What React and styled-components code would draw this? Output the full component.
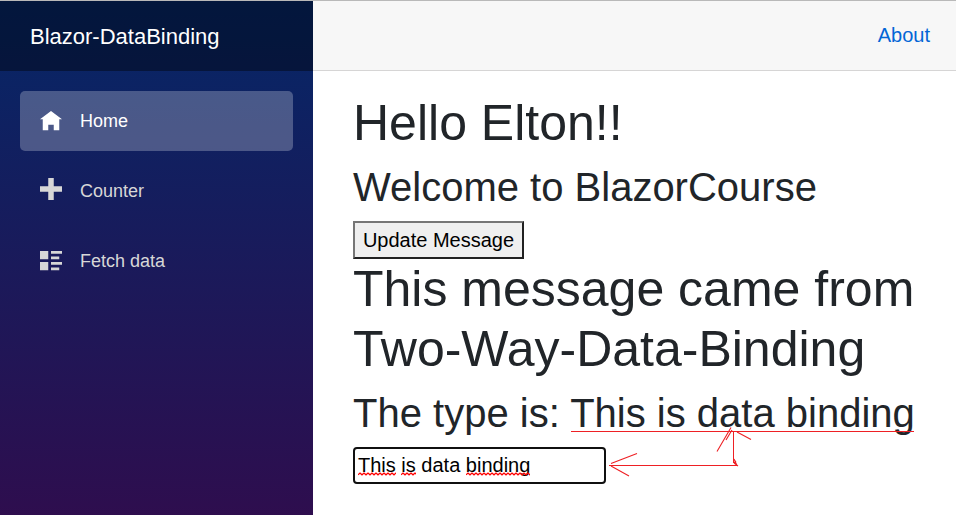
import React from 'react';
import styled, { createGlobalStyle } from 'styled-components';

const GlobalStyle = createGlobalStyle`
  *, *::before, *::after { box-sizing: border-box; }
  html, body { margin: 0; height: 100%; overflow: hidden; }
  body {
    background: #fff;
    color: #212529;
    font-family: "Liberation Sans", Arial, sans-serif;
    font-size: 20px;
    line-height: 1.5;
  }
`;

const Page = styled.div`
  position: relative;
  display: flex;
  height: 515px;
  border-top: 1px solid #b9b9b9;
  overflow: hidden;
`;

const Sidebar = styled.nav`
  flex: 0 0 313px;
  background: linear-gradient(180deg, rgb(5, 39, 103) 0, #3a0647 665px);
`;

const Brand = styled.div`
  display: flex;
  align-items: center;
  height: 70px;
  padding-left: 30px;
  background: rgba(0, 0, 0, 0.4);
  color: #fff;
  font-size: 22px;
`;

const NavList = styled.div`
  display: flex;
  flex-direction: column;
  gap: 10px;
  padding: 20px 20px 0;
`;

const NavItem = styled.a`
  display: flex;
  align-items: center;
  height: 60px;
  padding-left: 20px;
  border-radius: 5px;
  background: ${(p) => (p.$active ? 'rgba(255, 255, 255, 0.25)' : 'transparent')};
  color: ${(p) => (p.$active ? '#fff' : '#d7d7d7')};
  font-size: 18px;
`;

const Icon = styled.svg`
  width: 22px;
  height: 22px;
  margin: ${(p) => p.$shift}px 18px 0 0;
  fill: currentColor;
`;

const Main = styled.main`
  flex: 1;
  min-width: 0;
`;

const TopRow = styled.header`
  display: flex;
  align-items: center;
  justify-content: flex-end;
  height: 70px;
  padding: 0 26px 2px 0;
  border-bottom: 1px solid #d6d5d5;
  background: #f7f7f7;
`;

const AboutLink = styled.a`
  color: #0366d6;
`;

const Content = styled.article`
  padding: 22px 40px 0;
`;

const Title = styled.h1`
  margin: 0 0 10px;
  font-size: 50px;
  font-weight: 400;
  line-height: 60px;
  white-space: nowrap;
`;

const Subtitle = styled.h2`
  margin: 0 0 10px;
  font-size: 40px;
  font-weight: 400;
  line-height: 48px;
  white-space: nowrap;
`;

const UpdateButton = styled.button`
  display: block;
  width: 171px;
  height: 38px;
  padding: 0;
  border: 2px solid;
  border-color: #767676 #212121 #212121 #767676;
  background: #efefef;
  color: #000;
  font: 20px "Liberation Sans", Arial, sans-serif;
  white-space: nowrap;
`;

const TextField = styled.div`
  width: 253px;
  height: 37px;
  padding: 0 3px;
  border: 2px solid #101010;
  border-radius: 4px;
  color: #000;
  line-height: 32px;
  white-space: pre;
`;

const Misspelled = styled.span`
  position: relative;
`;

const Squiggle = styled.svg`
  position: absolute;
  left: 0;
  bottom: 0;
  width: 100%;
  height: 4px;
  overflow: hidden;
`;

const Annotations = styled.svg`
  position: absolute;
  left: 0;
  top: -1px;
  width: 956px;
  height: 515px;
  pointer-events: none;
  fill: none;
  stroke: #ee2024;
`;

const ICONS = {
  home: 'M4 0l-4 3h1v4h2v-2h2v2h2v-4.03l1 .03-4-3z',
  plus: 'M3 0v3h-3v2h3v3h2v-3h3v-2h-3v-3h-2z',
  list: 'M0 0v3h3v-3h-3zm4 0v1h4v-1h-4zm0 2v1h3v-1h-3zm-4 2v3h3v-3h-3zm4 0v1h4v-1h-4zm0 2v1h3v-1h-3z',
};

const LINKS = [
  { label: 'Home', icon: 'home', shift: 2, active: true },
  { label: 'Counter', icon: 'plus', shift: -4 },
  { label: 'Fetch data', icon: 'list', shift: 1 },
];

const WAVE = 'M0 2.8' + Array.from({ length: 30 }, (_, i) => `L${i * 4 + 2} 1L${i * 4 + 4} 2.8`).join('');

function Flagged({ children }) {
  return (
    <Misspelled>
      {children}
      <Squiggle>
        <path d={WAVE} fill="none" stroke="#f00" strokeWidth="1.3" />
      </Squiggle>
    </Misspelled>
  );
}

export default function App() {
  return (
    <>
      <GlobalStyle />
      <Page>
        <Sidebar>
          <Brand>Blazor-DataBinding</Brand>
          <NavList>
            {LINKS.map((l) => (
              <NavItem key={l.label} $active={l.active}>
                <Icon viewBox="0 0 8 8" $shift={l.shift}>
                  <path d={ICONS[l.icon]} />
                </Icon>
                {l.label}
              </NavItem>
            ))}
          </NavList>
        </Sidebar>
        <Main>
          <TopRow>
            <AboutLink>About</AboutLink>
          </TopRow>
          <Content>
            <Title>Hello Elton!!</Title>
            <Subtitle>Welcome to BlazorCourse</Subtitle>
            <UpdateButton>Update Message</UpdateButton>
            <Title>
              This message came from
              <br />
              Two-Way-Data-Binding
            </Title>
            <Subtitle>The type is: This is data binding</Subtitle>
            <TextField>
              <Flagged>This</Flagged> <Flagged>is</Flagged> data <Flagged>binding</Flagged>
            </TextField>
          </Content>
        </Main>
        <Annotations viewBox="0 0 956 515">
          <path d="M571 431.5H914M609 465.5H737M733.5 432V463" />
          <path
            d="M611 463.5L637 453.5M611 466L629 476M717 451.5L731 427.5M726 440L732 430M737 432L751 439.5M734 459L737 465.5M734 463L736 461M734 463L738 466"
            strokeWidth="1.1"
          />
        </Annotations>
      </Page>
    </>
  );
}
